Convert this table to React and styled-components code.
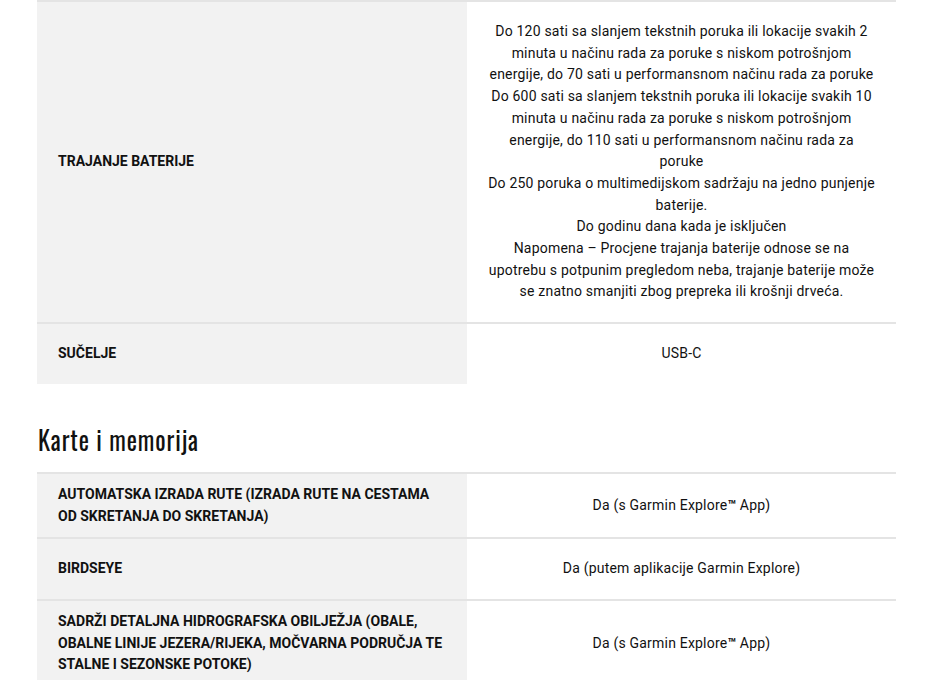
import React from 'react';
import styled, { createGlobalStyle } from 'styled-components';

const GlobalStyle = createGlobalStyle`
  html, body {
    margin: 0;
    padding: 0;
    background: #fff;
  }
  body {
    font-family: Roboto, "Liberation Sans", Arial, sans-serif;
    color: #111;
  }
`;

const Page = styled.div`
  padding: 0 30px 0 37px;
`;

const SectionTitle = styled.h2`
  margin: 38px 0 16px 1px;
  font-family: Oswald, "Roboto Condensed", Roboto, "Liberation Sans", sans-serif;
  font-weight: 400;
  font-size: 27px;
  line-height: 34px;
  color: #111;

  span {
    display: inline-block;
    letter-spacing: 1px;
    transform: scaleX(0.9);
    transform-origin: left center;
  }
`;

const SpecTable = styled.div`
  display: flex;
  flex-direction: column;
`;

const Row = styled.div`
  display: grid;
  grid-template-columns: 430px 1fr;
  border-top: 2px solid #e4e4e4;
`;

const Label = styled.div`
  display: flex;
  align-items: center;
  background: #f2f2f2;
  padding: 10px 20px 10px 21px;
  font-size: 14px;
  line-height: 21.7px;
  font-weight: 700;
  text-transform: uppercase;
  color: #111;
`;

const Value = styled.div`
  display: flex;
  flex-direction: column;
  justify-content: center;
  align-items: center;
  padding: 19px 20px;
  font-size: 14px;
  line-height: 21.7px;
  letter-spacing: 0.2px;
  text-align: center;
  color: #111;
`;

const Line = styled.span`
  display: block;
`;

const Mark = styled.span`
  font-weight: 700;
  letter-spacing: 0;
`;

const renderText = (text) => {
  const parts = text.split('™');
  if (parts.length === 1) return text;
  return (
    <>
      {parts[0]}
      <Mark>™</Mark>
      {parts[1]}
    </>
  );
};

const sections = [
  {
    title: null,
    rows: [
      {
        label: 'Trajanje baterije',
        value: [
          'Do 120 sati sa slanjem tekstnih poruka ili lokacije svakih 2 minuta u načinu rada za poruke s niskom potrošnjom energije, do 70 sati u performansnom načinu rada za poruke',
          'Do 600 sati sa slanjem tekstnih poruka ili lokacije svakih 10 minuta u načinu rada za poruke s niskom potrošnjom energije, do 110 sati u performansnom načinu rada za poruke',
          'Do 250 poruka o multimedijskom sadržaju na jedno punjenje baterije.',
          'Do godinu dana kada je isključen',
          'Napomena – Procjene trajanja baterije odnose se na upotrebu s potpunim pregledom neba, trajanje baterije može se znatno smanjiti zbog prepreka ili krošnji drveća.',
        ],
      },
      { label: 'Sučelje', value: ['USB-C'] },
    ],
  },
  {
    title: 'Karte i memorija',
    rows: [
      {
        label: 'Automatska izrada rute (izrada rute na cestama od skretanja do skretanja)',
        value: ['Da (s Garmin Explore™ App)'],
      },
      { label: 'BirdsEye', value: ['Da (putem aplikacije Garmin Explore)'] },
      {
        label: 'Sadrži detaljna hidrografska obilježja (obale, obalne linije jezera/rijeka, močvarna područja te stalne i sezonske potoke)',
        value: ['Da (s Garmin Explore™ App)'],
      },
    ],
  },
];

export default function App() {
  return (
    <Page>
      <GlobalStyle />
      {sections.map((section, i) => (
        <section key={i}>
          {section.title && (
            <SectionTitle>
              <span>{section.title}</span>
            </SectionTitle>
          )}
          <SpecTable>
            {section.rows.map((row) => (
              <Row key={row.label}>
                <Label>{row.label}</Label>
                <Value>
                  {row.value.map((text) => (
                    <Line key={text}>{renderText(text)}</Line>
                  ))}
                </Value>
              </Row>
            ))}
          </SpecTable>
        </section>
      ))}
    </Page>
  );
}
